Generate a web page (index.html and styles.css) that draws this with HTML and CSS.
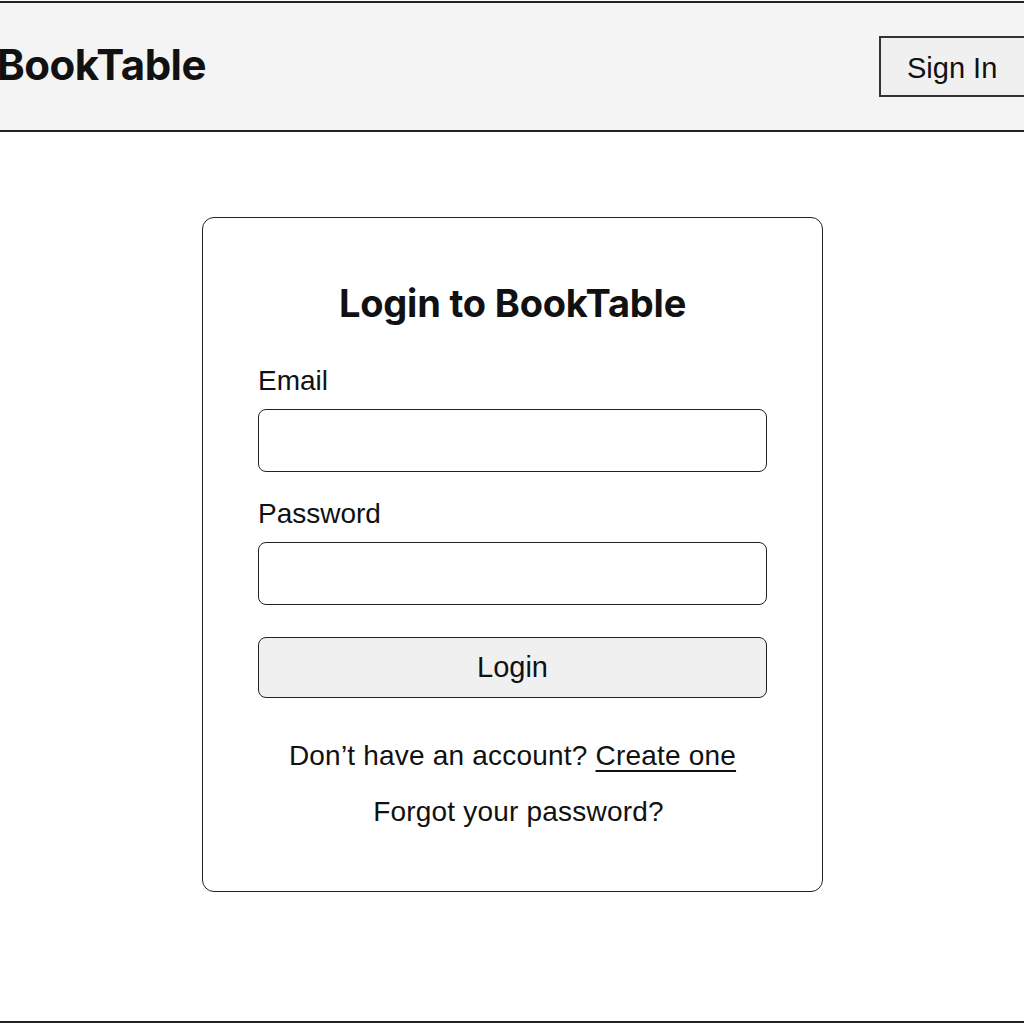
FILE: index.html
```html
<!DOCTYPE html>
<html>
<head>
<meta charset="utf-8">
<link rel="stylesheet" href="styles.css">
</head>
<body>
<header class="topbar">
  <div class="logo">BookTable</div>
  <button class="signin">Sign In</button>
</header>
<main class="main">
  <section class="card">
    <h1 class="title">Login to BookTable</h1>
    <label class="label">Email</label>
    <div class="input"></div>
    <label class="label">Password</label>
    <div class="input"></div>
    <button class="login">Login</button>
    <p class="note">Don’t have an account? <a class="link">Create one</a></p>
    <p class="note forgot">Forgot your password?</p>
  </section>
</main>
<footer class="footer"></footer>
</body>
</html>
```
FILE: styles.css
```css
html, body {
  margin: 0;
  padding: 0;
  background: #fff;
  width: 1024px;
  height: 1024px;
  overflow: hidden;
  font-family: "Liberation Sans", Arial, sans-serif;
  color: #111;
}
.topbar {
  box-sizing: border-box;
  height: 131px;
  margin-top: 1px;
  background: #f4f4f4;
  border-top: 2px solid #222;
  border-bottom: 2px solid #222;
  display: flex;
  align-items: center;
  justify-content: space-between;
}
.logo {
  font-family: Inter, sans-serif;
  font-weight: 700;
  font-size: 42px;
  letter-spacing: -0.5px;
  margin-left: -3px;
  margin-top: -4px;
}
.signin {
  box-sizing: border-box;
  width: 160px;
  height: 61px;
  margin-right: -15px;
  margin-top: -1px;
  padding-top: 5px;
  background: #f0f0f0;
  border: 2px solid #333;
  font-family: "Liberation Sans", Arial, sans-serif;
  font-size: 29px;
  color: #111;
  text-align: left;
  padding-left: 26px;
}
.main {
  height: 889px;
  display: flex;
  justify-content: center;
  padding-top: 85px;
  box-sizing: border-box;
}
.card {
  box-sizing: border-box;
  width: 621px;
  height: 675px;
  border: 1.5px solid #222;
  border-radius: 12px;
  padding: 62px 55px 0 55px;
  display: flex;
  flex-direction: column;
  margin-left: 1px;
}
.title {
  margin: 0 0 39px 0;
  text-align: center;
  font-family: Inter, sans-serif;
  font-weight: 700;
  font-size: 38px;
  line-height: 46px;
  letter-spacing: -0.2px;
}
.label {
  font-size: 28px;
  line-height: 32px;
  margin-bottom: 12px;
}
.input {
  height: 63px;
  box-sizing: border-box;
  border: 1.5px solid #222;
  border-radius: 8px;
  margin-bottom: 26px;
  background: #fff;
}
.login {
  box-sizing: border-box;
  height: 61px;
  margin-top: 6px;
  background: #f0f0f0;
  border: 1.5px solid #222;
  border-radius: 8px;
  font-family: "Liberation Sans", Arial, sans-serif;
  font-size: 29px;
  color: #111;
}
.note {
  margin: 40px 0 0 0;
  text-align: center;
  font-size: 28px;
  line-height: 36px;
  letter-spacing: 0.2px;
}
.forgot {
  margin-top: 20px;
  margin-left: 12px;
}
.link {
  text-decoration: underline;
  text-underline-offset: 5px;
  text-decoration-thickness: 1.5px;
}
.footer {
  position: absolute;
  left: 0;
  top: 1021px;
  width: 1024px;
  border-top: 2px solid #222;
}
```
